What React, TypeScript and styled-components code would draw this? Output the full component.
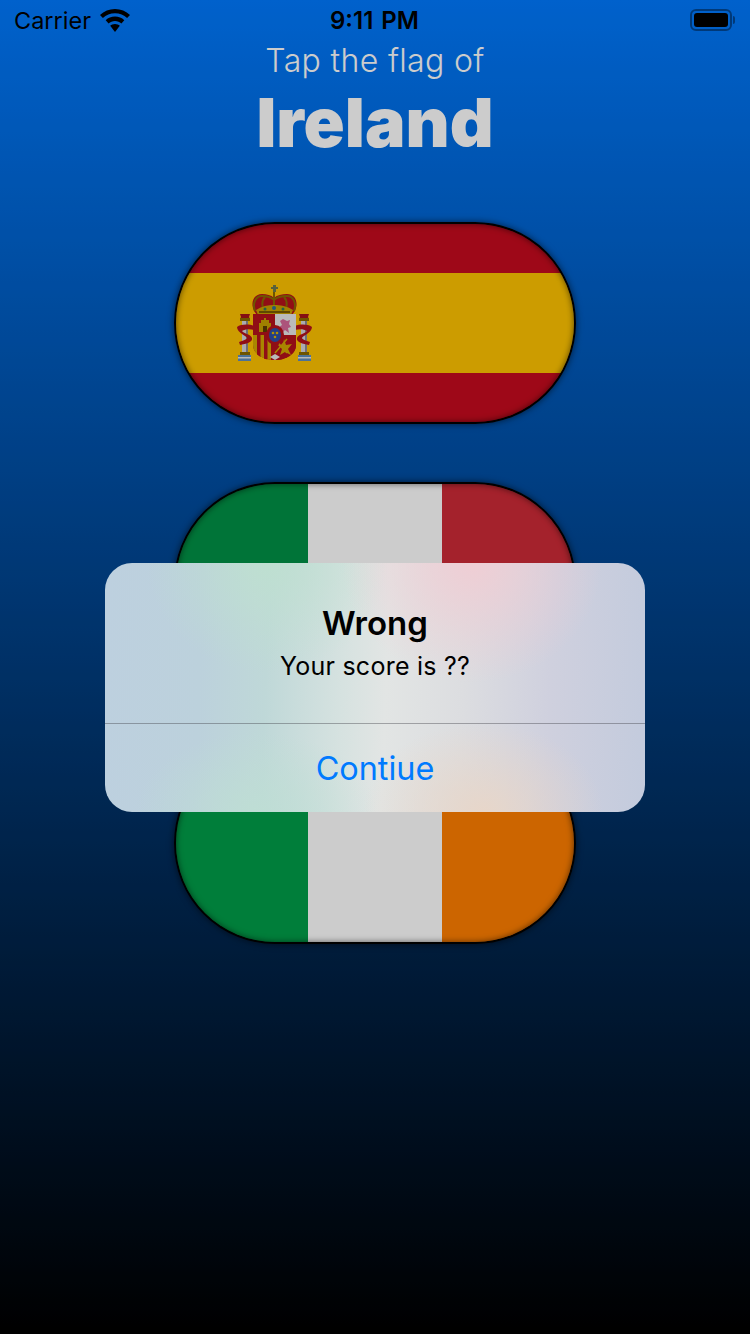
import React from "react";
import styled, { createGlobalStyle } from "styled-components";

const GlobalStyle = createGlobalStyle`
  html, body {
    margin: 0;
    padding: 0;
    background: #000;
  }
  * {
    box-sizing: border-box;
  }
`;

const Page = styled.div`
  position: relative;
  width: 750px;
  height: 1334px;
  overflow: hidden;
  background: linear-gradient(180deg, #007aff 0%, #000 100%);
  font-family: Inter, "Noto Sans", sans-serif;
`;

const StatusBar = styled.div`
  display: grid;
  grid-template-columns: 1fr auto 1fr;
  align-items: center;
  height: 40px;
  padding: 0 15px 0 14px;
  color: #000;
  font-size: 23.5px;
`;

const StatusLeft = styled.div`
  display: flex;
  align-items: center;
  gap: 9px;
`;

const Time = styled.div`
  font-weight: 600;
  font-size: 24px;
  word-spacing: 2px;
`;

const BatteryWrap = styled.div`
  display: flex;
  align-items: center;
  justify-self: end;
`;

const BatteryBody = styled.div`
  width: 42px;
  height: 22px;
  padding: 2px;
  border: 2px solid rgba(0, 0, 0, 0.4);
  border-radius: 6px;
`;

const BatteryFill = styled.div`
  width: 100%;
  height: 100%;
  background: #000;
  border-radius: 3px;
`;

const BatteryNub = styled.div`
  width: 2px;
  height: 8px;
  margin-left: 1px;
  background: rgba(0, 0, 0, 0.4);
  border-radius: 0 2px 2px 0;
`;

const Header = styled.header`
  display: flex;
  flex-direction: column;
  align-items: center;
  color: #fff;
`;

const Prompt = styled.div`
  font-size: 32px;
  font-weight: 300;
  line-height: 42px;
  letter-spacing: 0.35px;
`;

const Country = styled.div`
  font-size: 68px;
  font-weight: 900;
  line-height: 80px;
`;

const FlagList = styled.main`
  display: flex;
  flex-direction: column;
  align-items: center;
  gap: 58px;
  margin-top: 60px;
`;

const FlagFrame = styled.div`
  border-radius: 101px;
  box-shadow: 0 0 7px rgba(0, 0, 0, 0.6);
`;

const Flag = styled.div<{ $vertical?: boolean }>`
  position: relative;
  display: flex;
  flex-direction: ${(p) => (p.$vertical ? "column" : "row")};
  width: 402px;
  height: 202px;
  border: 2px solid #000;
  border-radius: 101px;
  overflow: hidden;
  background: #000;
  &::after {
    content: "";
    position: absolute;
    inset: 0;
    border-radius: 99px;
    box-shadow: inset 0 0 6px rgba(0, 0, 0, 0.55);
  }
`;

const Stripe = styled.div<{ $color: string; $grow: number }>`
  flex: ${(p) => p.$grow} 1 0;
  display: flex;
  align-items: center;
  padding-left: 61px;
  background: ${(p) => p.$color};
`;

const Overlay = styled.div`
  position: absolute;
  inset: 0;
  display: flex;
  align-items: center;
  justify-content: center;
  padding-top: 41px;
  background: rgba(0, 0, 0, 0.2);
`;

const Alert = styled.div`
  width: 540px;
  height: 249px;
  border-radius: 27px;
  overflow: hidden;
  background:
    radial-gradient(ellipse 130px 120px at 68% 0%, rgba(240, 205, 212, 0.95), rgba(240, 205, 212, 0)),
    radial-gradient(ellipse 120px 90px at 70% 100%, rgba(232, 214, 200, 0.95), rgba(232, 214, 200, 0)),
    radial-gradient(ellipse 120px 110px at 30% 0%, rgba(190, 224, 208, 0.9), rgba(190, 224, 208, 0)),
    radial-gradient(ellipse 120px 80px at 28% 100%, rgba(190, 222, 212, 0.9), rgba(190, 222, 212, 0)),
    linear-gradient(92deg, #bdd0df 0%, #bcd1dc 18%, #bfd8d8 30%, #d6e2e0 44%, #e2e5e4 52%, #dcdde0 66%, #cfd0de 82%, #c3cbdd 100%);
  display: flex;
  flex-direction: column;
`;

const AlertBody = styled.div`
  height: 160px;
  padding-top: 39px;
  text-align: center;
  color: #000;
`;

const AlertTitle = styled.div`
  font-size: 33px;
  font-weight: 600;
  line-height: 42px;
`;

const AlertMessage = styled.div`
  margin-top: 4px;
  font-size: 25px;
  line-height: 36px;
  letter-spacing: 0.25px;
`;

const AlertAction = styled.button`
  flex: 1;
  border: none;
  border-top: 1px solid rgba(60, 60, 67, 0.4);
  background: transparent;
  color: #007aff;
  font-family: inherit;
  font-size: 32.4px;
  padding: 0;
`;

const WifiIcon = () => (
  <svg width="30" height="23" viewBox="0 0 30 23">
    <path
      d="M15 0C9.2 0 4 2.2 0 5.9l2.9 3.2C6 6.1 10.3 4.3 15 4.3s9 1.8 12.1 4.8L30 5.9C26 2.2 20.8 0 15 0z"
      fill="#000"
    />
    <path
      d="M15 7.6c-3.6 0-6.9 1.4-9.3 3.6l2.9 3.2c1.7-1.5 3.9-2.5 6.4-2.5s4.7 1 6.4 2.5l2.9-3.2C21.9 9 18.6 7.6 15 7.6z"
      fill="#000"
    />
    <path d="M15 15c-1.9 0-3.6.7-4.8 1.8L15 23l4.8-6.2C18.6 15.7 16.9 15 15 15z" fill="#000" />
  </svg>
);

// spanish coat of arms, drawn small so only the rough shapes matter
const CoatOfArms = () => (
  <svg width="76" height="77" viewBox="0 0 76 77">
    {/* crown */}
    <rect x="36" y="0" width="3" height="7" fill="#6f7a4a" />
    <rect x="34" y="2" width="7" height="2" fill="#6f7a4a" />
    <path d="M17 26c-4-9 0-17 8-17 5 0 9 1 12 4 3-3 8-4 13-4 8 0 12 8 8 17l-3 4H20z" fill="#b5121b" />
    <path
      d="M18 26c-3-8 1-15 7-15 5 0 9 1 12 4 3-3 8-4 13-4 6 0 10 7 7 15M28 12c-3 3-3 8-2 12M47 12c3 3 3 8 2 12M37 7v13"
      fill="none"
      stroke="#8a6a00"
      strokeWidth="2"
    />
    <path d="M19 25c6-4 12-5 18-5s13 1 19 5l-2 5H21z" fill="#c9a000" />
    <rect x="22" y="26" width="31" height="2" fill="#7a5a00" />
    <circle cx="37" cy="23" r="2" fill="#2c6e9e" />
    <circle cx="28" cy="24" r="1.5" fill="#2c7a5e" />
    <circle cx="46" cy="24" r="1.5" fill="#2c7a5e" />
    {/* pillars */}
    <path d="M3 29h10l-1 3 1 2H3l1-2z" fill="#a51218" />
    <rect x="3" y="33" width="10" height="3" fill="#8a6a00" />
    <rect x="5" y="36" width="6" height="34" fill="#d6d6dc" />
    <rect x="9" y="36" width="2" height="34" fill="#8a8a94" />
    <rect x="3" y="67" width="10" height="3" fill="#8a6a00" />
    <rect x="1" y="70" width="13" height="6" fill="#5f8fbf" />
    <rect x="1" y="72" width="13" height="1.5" fill="#e8e8e8" />
    <path d="M62 29h10l-1 3 1 2H62l1-2z" fill="#a51218" />
    <rect x="62" y="33" width="10" height="3" fill="#8a6a00" />
    <rect x="64" y="36" width="6" height="34" fill="#d6d6dc" />
    <rect x="68" y="36" width="2" height="34" fill="#8a8a94" />
    <rect x="62" y="67" width="10" height="3" fill="#8a6a00" />
    <rect x="61" y="70" width="13" height="6" fill="#5f8fbf" />
    <rect x="61" y="72" width="13" height="1.5" fill="#e8e8e8" />
    {/* ribbons */}
    <path d="M0 42c4-3 12-3 17-1v4c-4-1-9-1-12 1 2 3 9 3 10 7 1 4-6 6-12 7l-1-3c4-1 8-3 8-4 0-2-10-5-10-11z" fill="#b5121b" />
    <path d="M75 42c-4-3-12-3-17-1v4c4-1 9-1 12 1-2 3-9 3-10 7-1 4 6 6 12 7l1-3c-4-1-8-3-8-4 0-2 10-5 10-11z" fill="#b5121b" />
    {/* shield */}
    <path d="M16 29h43v31c0 9-10 15-21 15S16 69 16 60z" fill="#b5121b" />
    <rect x="38" y="29" width="21" height="21" fill="#e9e9e9" />
    <path d="M43 36l3-2 4 2 3-1-1 4 2 3-3 1 1 5-4-3-3 3-1-4-2-2 3-2z" fill="#d8689a" />
    <path d="M22 47v-9h2v-3h3v-2h2v2h3v3h2v9z" fill="#c8a000" />
    <rect x="26" y="41" width="4" height="6" fill="#5c3d00" />
    <path d="M16 50h22v25c-12 0-22-6-22-15z" fill="#d4a800" />
    <path d="M20 50h3.5v22l-3.5-2.5zM27 50h3.5v24.5l-3.5-.7zM34 50h4v25h-4z" fill="#b5121b" />
    <path d="M38 50h21v10c0 9-10 15-21 15z" fill="#b5121b" />
    <path d="M47 54l2 6 6-1-4 5 3 6-6-3-5 3 2-6-4-4h5z" fill="#d4a800" />
    <path d="M38 54l12 14M50 54L38 68" stroke="#d4a800" strokeWidth="1.5" />
    <ellipse cx="38" cy="50" rx="9" ry="10" fill="#b5121b" />
    <ellipse cx="38" cy="50" rx="6" ry="7" fill="#2b4fa8" />
    <circle cx="36" cy="48" r="1.3" fill="#e0b400" />
    <circle cx="40" cy="48" r="1.3" fill="#e0b400" />
    <circle cx="38" cy="52" r="1.3" fill="#e0b400" />
    <path d="M33 72l5-3 5 3-5 3z" fill="#e9e9e9" />
  </svg>
);

export default function App() {
  return (
    <Page>
      <GlobalStyle />
      <StatusBar>
        <StatusLeft>
          Carrier
          <WifiIcon />
        </StatusLeft>
        <Time>9:11 PM</Time>
        <BatteryWrap>
          <BatteryBody>
            <BatteryFill />
          </BatteryBody>
          <BatteryNub />
        </BatteryWrap>
      </StatusBar>
      <Header>
        <Prompt>Tap the flag of</Prompt>
        <Country>Ireland</Country>
      </Header>
      <FlagList>
        <FlagFrame>
          <Flag $vertical>
            <Stripe $color="#c60b1e" $grow={49} />
            <Stripe $color="#ffc400" $grow={100}>
              <CoatOfArms />
            </Stripe>
            <Stripe $color="#c60b1e" $grow={49} />
          </Flag>
        </FlagFrame>
        <FlagFrame>
          <Flag>
            <Stripe $color="#009246" $grow={132} />
            <Stripe $color="#ffffff" $grow={134} />
            <Stripe $color="#ce2b37" $grow={132} />
          </Flag>
        </FlagFrame>
        <FlagFrame>
          <Flag>
            <Stripe $color="#009e49" $grow={132} />
            <Stripe $color="#ffffff" $grow={134} />
            <Stripe $color="#ff7f00" $grow={132} />
          </Flag>
        </FlagFrame>
      </FlagList>
      <Overlay>
        <Alert>
          <AlertBody>
            <AlertTitle>Wrong</AlertTitle>
            <AlertMessage>Your score is ??</AlertMessage>
          </AlertBody>
          <AlertAction>Contiue</AlertAction>
        </Alert>
      </Overlay>
    </Page>
  );
}
